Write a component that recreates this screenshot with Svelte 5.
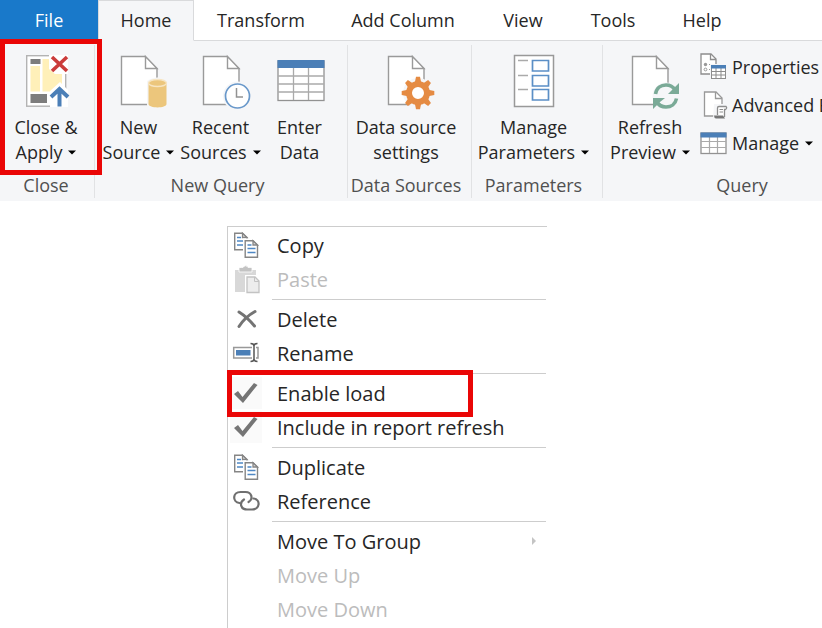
<script>
  const tabs = [
    { name: 'File', width: 98 },
    { name: 'Home', width: 96 },
    { name: 'Transform', width: 134 },
    { name: 'Add Column', width: 150 },
    { name: 'View', width: 90 },
    { name: 'Tools', width: 90 },
    { name: 'Help', width: 88 }
  ];

  const groups = [
    { name: 'Close', width: 95, commands: [{ icon: 'apply', lines: ['Close &', 'Apply'], caret: true, width: 92 }] },
    {
      name: 'New Query',
      width: 253,
      commands: [
        { icon: 'source', lines: ['New', 'Source'], caret: true, width: 82 },
        { icon: 'recent', lines: ['Recent', 'Sources'], caret: true, width: 82 },
        { icon: 'enter', lines: ['Enter', 'Data'], width: 76 }
      ]
    },
    { name: 'Data Sources', width: 124, commands: [{ icon: 'settings', lines: ['Data source', 'settings'], width: 116 }] },
    { name: 'Parameters', width: 131, commands: [{ icon: 'params', lines: ['Manage', 'Parameters'], caret: true, width: 120 }] },
    {
      name: 'Query',
      width: 286,
      commands: [{ icon: 'refresh', lines: ['Refresh', 'Preview'], caret: true, width: 94 }],
      small: [
        { icon: 'properties', label: 'Properties' },
        { icon: 'editor', label: 'Advanced Editor' },
        { icon: 'table', label: 'Manage', caret: true }
      ]
    }
  ];

  const menu = [
    [
      { label: 'Copy', icon: 'copy' },
      { label: 'Paste', icon: 'paste', disabled: true }
    ],
    [
      { label: 'Delete', icon: 'delete' },
      { label: 'Rename', icon: 'rename' }
    ],
    [
      { label: 'Enable load', check: true, marked: true },
      { label: 'Include in report refresh', check: true }
    ],
    [
      { label: 'Duplicate', icon: 'copy' },
      { label: 'Reference', icon: 'link' }
    ],
    [
      { label: 'Move To Group', submenu: true },
      { label: 'Move Up', disabled: true },
      { label: 'Move Down', disabled: true }
    ]
  ];

  const teeth = [0, 45, 90, 135, 180, 225, 270, 315];
</script>

{#snippet page()}
  <path d="M12.5 4.5H36L48 16.5V52.5H12.5Z" fill="#fff" stroke="#9a9a9a" stroke-width="1.4" />
  <path d="M36.5 4.5V16.5H48Z" fill="#fff" stroke="#9a9a9a" stroke-width="1.4" />
{/snippet}

{#snippet bigIcon(name)}
  <svg class="big-icon" viewBox="0 0 60 60" aria-hidden="true">
    {#if name === 'apply'}
      <rect x="10.7" y="3.7" width="39" height="50.5" fill="#fff" stroke="#b3b3b3" stroke-width="1.4" />
      <rect x="14.5" y="7" width="10" height="5" fill="#7d7d7d" />
      <path d="M14.5 14H24V39.5H14.5ZM26.5 7H46V39.5H26.5Z" fill="#fff0b9" />
      <rect x="14.5" y="42" width="16.5" height="9" fill="#7d7d7d" />
      <path d="M33 3H52V22H39L33 17ZM44 30L52 38V55H34V39Z" fill="#fff" />
      <path d="M36 5L51 19M51 5L36 19" stroke="#cb3c3b" stroke-width="3.6" />
      <path d="M35 45L43.5 37L52 45M43.5 37V54.5" fill="none" stroke="#4b7fb7" stroke-width="4" />
    {:else if name === 'source'}
      {@render page()}
      <path d="M38 56V29Q48 22 60 29V56Z" fill="#f5f6f8" />
      <path d="M39.5 31V52C39.5 56.500 57.5 56.500 57.5 52V31" fill="#ecc67c" />
      <ellipse cx="48.5" cy="31" rx="9" ry="3.5" fill="#ecc67c" stroke="#f7e5c2" stroke-width="1.4" />
    {:else if name === 'recent'}
      {@render page()}
      <circle cx="46.5" cy="44" r="14.5" fill="#f5f6f8" />
      <circle cx="46.5" cy="44" r="12" fill="#fff" stroke="#6998ca" stroke-width="1.7" />
      <path d="M45.5 36V45H52" fill="none" stroke="#929292" stroke-width="1.5" />
    {:else if name === 'enter'}
      <rect x="8" y="9" width="46" height="39.5" fill="#fff" stroke="#929292" stroke-width="1.3" />
      <path d="M8 24H54M8 32H54M8 40H54M23.5 16V48M38.5 16V48" stroke="#aaa" stroke-width="1.3" />
      <rect x="7.5" y="8" width="47" height="8" fill="#4b7fb7" />
    {:else if name === 'settings'}
      {@render page()}
      <g transform="translate(42 41)">
        <circle r="15" fill="#f5f6f8" />
        {#each teeth as angle}
          <path d="M-3.5 -9L-2 -16.3H2L3.5 -9Z" fill="#e58b43" transform="rotate({angle})" />
        {/each}
        <circle r="9" fill="#fff" stroke="#e58b43" stroke-width="6" />
      </g>
    {:else if name === 'params'}
      <rect x="10.5" y="3.5" width="39" height="51" fill="#fff" stroke="#999" stroke-width="1.5" />
      <path d="M14 8.5H24M14 23.5H24M14 37.5H24" stroke="#aaa" stroke-width="1.5" />
      <path d="M28.5 8.5H44.5V19H28.5ZM28.5 23.5H44.5V34H28.5ZM28.5 37.5H44.5V48H28.5Z" fill="#fff" stroke="#5b8fc6" stroke-width="1.7" />
    {:else if name === 'refresh'}
      {@render page()}
      <circle cx="46" cy="44" r="13.5" fill="#f5f6f8" />
      <path d="M35.5 42C36.5 36 41 33 46 33C50 33 53 34.5 55 38M56.5 46.5C55.5 52 51 55 46 55C42 55 39 53.5 37 50" fill="none" stroke="#7aaa97" stroke-width="3.6" />
      <path d="M59 31V42H48L52 38ZM33 57V46H45L40 50Z" fill="#7aaa97" />
    {/if}
  </svg>
{/snippet}

{#snippet smallIcon(name)}
  <svg class="small-icon" viewBox="0 0 28 28" aria-hidden="true">
    {#if name === 'properties'}
      <path d="M1 1H11L16 6V21H1Z" fill="#fff" stroke="#8d8d8d" stroke-width="1.3" />
      <path d="M10.5 1V6.5H16" fill="none" stroke="#8d8d8d" stroke-width="1.3" />
      <circle cx="5.5" cy="11.5" r="1.7" fill="#999" />
      <circle cx="5.5" cy="16.5" r="1.4" fill="#fff" stroke="#999" />
      <path d="M9 11.5H12M9 16.5H12" stroke="#999" />
      <rect x="10" y="11" width="18" height="16" fill="#f5f6f8" />
      <rect x="11.5" y="13" width="14" height="12.5" fill="#fff" stroke="#8d8d8d" />
      <path d="M11 18.5H26M11 22H26M16 15V26M21 15V26" stroke="#8d8d8d" />
      <rect x="11" y="12" width="15" height="3.5" fill="#4b7fb7" />
    {:else if name === 'editor'}
      <path d="M4.5 1H16L22 7V25H4.5Z" fill="#fff" stroke="#999" stroke-width="1.3" />
      <path d="M15.5 1V7.5H22" fill="none" stroke="#999" stroke-width="1.3" />
      <path d="M14 13H28V28H13Z" fill="#f5f6f8" />
      <path d="M17.5 24V17Q17.5 15.5 19 15.5H26Q27.5 17 25.5 18.5H24.5V26" fill="#fff" stroke="#8d8d8d" stroke-width="1.3" />
      <path d="M19.5 18.5H23M19.5 21H23" stroke="#8d8d8d" />
      <path d="M14 24.5H23L25 27.5H16Q14 27 14 24.5Z" fill="#777" />
    {:else}
      <rect x="1" y="4" width="25" height="20.5" fill="#fff" stroke="#929292" stroke-width="1.3" />
      <path d="M1 12.5H26M1 18.5H26M9.5 8V24M17.5 8V24" stroke="#aaa" stroke-width="1.2" />
      <rect x=".5" y="3.5" width="26" height="5" fill="#4b7fb7" />
    {/if}
  </svg>
{/snippet}

{#snippet caret()}
  <svg class="caret" viewBox="0 0 8 5" aria-hidden="true"><path d="M0 .5H8L4 4.5Z" fill="#000" /></svg>
{/snippet}

{#snippet sheet()}
  <path d="M.7 .7H8.5L13 5V17.3H.7Z" fill="#fff" stroke="#858585" stroke-width="1.4" />
  <path d="M8.5 .7V5H13Z" fill="#ddd" stroke="#858585" stroke-width="1.3" />
  <path d="M3 5H7M3 8.5H11M3 12.5H11" stroke="#4f88c4" stroke-width="1.5" />
{/snippet}

{#snippet menuIcon(name)}
  <svg class="menu-icon" viewBox="0 0 32 32" aria-hidden="true">
    {#if name === 'copy'}
      <g transform="translate(4 3.5)">{@render sheet()}</g>
      <path d="M13 9.5H25L30 14.5V30H13Z" fill="#fff" />
      <g transform="translate(14.500 11)">{@render sheet()}</g>
    {:else if name === 'paste'}
      <path d="M5 7H11V4H14Q16 1 18 4H21V7H26V29H5Z" fill="#d8d8d8" />
      <path d="M9 4.5H13Q15.5 1 18 4.5H22V9H9Z" fill="#c3c3c3" stroke="#fff" stroke-width=".8" />
      <path d="M15 12H26L31 17V31H15Z" fill="#fff" />
      <path d="M17 14H25L29 18V29.5H17Z" fill="#ededed" stroke="#c3c3c3" stroke-width="1.3" />
      <path d="M24.5 14V18.5H29" fill="none" stroke="#c3c3c3" />
    {:else if name === 'delete'}
      <path d="M9 9Q17 14 24.5 23M25 8.5Q15 14 9 23.5" fill="none" stroke="#747474" stroke-width="3" stroke-linecap="round" />
    {:else if name === 'rename'}
      <path d="M22 10.5H3.7V21H22M26 10.5H28V21H26" fill="#fff" stroke="#999" stroke-width="1.5" />
      <rect x="6" y="13" width="14.5" height="5.500" fill="#4b7fb7" />
      <path d="M20.5 6.5Q24 6.5 24 9V22Q24 24.5 20.5 24.5M27.5 6.5Q24 6.5 24 9M24 22Q24 24.5 27.5 24.5" fill="none" stroke="#555" stroke-width="1.5" />
    {:else if name === 'check'}
      <path d="M4 17L8 14L12.5 20L24 6L27.5 8L13 26Z" fill="#757575" />
    {:else if name === 'link'}
      <g fill="none" stroke="#6f6f6f" stroke-width="2.2" stroke-linecap="round">
        <path d="M9.500 18C2 17 2.500 7 10.500 7H15.500C22 7 23.500 14 18.500 17" />
        <path d="M23.500 13.500C31 14.500 30 24.500 22 24.500H17C10.500 24.500 9 17.500 14 14.500" />
      </g>
    {/if}
  </svg>
{/snippet}

<div class="app">
  <header class="ribbon">
    <nav class="tabs" aria-label="Ribbon tabs">
      {#each tabs as tab}
        <button class="tab" class:file={tab.name === 'File'} class:current={tab.name === 'Home'} style:width="{tab.width}px">
          {tab.name}
        </button>
      {/each}
      <span class="tab-rest"></span>
    </nav>
    <div class="groups">
      {#each groups as group}
        <section class="group" class:marked={group.name === 'Close'} style:width="{group.width}px" aria-label={group.name}>
          <div class="commands">
            {#each group.commands as command}
              <button class="command" style:width="{command.width}px">
                {@render bigIcon(command.icon)}
                <span>{command.lines[0]}</span>
                <span>{command.lines[1]}{#if command.caret}{@render caret()}{/if}</span>
              </button>
            {/each}
            {#if group.small}
              <div class="stack">
                {#each group.small as item}
                  <button class="small">
                    {@render smallIcon(item.icon)}
                    <span>{item.label}{#if item.caret}{@render caret()}{/if}</span>
                  </button>
                {/each}
              </div>
            {/if}
          </div>
          <div class="group-name">{group.name}</div>
        </section>
      {/each}
    </div>
  </header>

  <div class="menu">
    {#each menu as section}
      <div class="section">
        {#each section as item}
          {#if item.check}
            <label class="item" class:marked={item.marked}>
              <input type="checkbox" checked />
              <span class="tick">{@render menuIcon('check')}</span>
              <span>{item.label}</span>
            </label>
          {:else}
            <button class="item" disabled={item.disabled}>
              <span class="slot">{@render menuIcon(item.icon)}</span>
              <span>{item.label}</span>
              {#if item.submenu}
                <svg class="arrow" viewBox="0 0 4 8" aria-hidden="true"><path d="M0 0L4 4L0 8Z" fill="#c4c4c4" /></svg>
              {/if}
            </button>
          {/if}
        {/each}
      </div>
    {/each}
  </div>
</div>

<style>
  .app {
    background: #fff;
    color: #262626;
    font-family: 'Open Sans', 'Noto Sans', sans-serif;
    font-size: 18px;
    line-height: 25px;
    overflow: hidden;
  }

  button {
    border: 0;
    padding: 0;
    background: none;
    color: inherit;
    font: inherit;
    white-space: nowrap;
  }

  svg {
    display: block;
    flex: none;
  }

  .ribbon {
    background: #f5f6f8;
  }

  .tabs {
    display: flex;
    height: 41px;
    background: #fff;
  }

  .tab {
    flex: none;
    border-bottom: 1px solid #d9dadc;
  }

  .tab.file {
    background: #1979ca;
    border-bottom-color: #f5f6f8;
    color: #fff;
  }

  .tab.current {
    background: #f5f6f8;
    border: 1px solid #d9dadc;
    border-bottom-color: #f5f6f8;
  }

  .tab-rest {
    flex: 1;
    border-bottom: 1px solid #d9dadc;
  }

  .groups {
    display: flex;
    padding: 4px 0 3px;
  }

  .group {
    position: relative;
    flex: none;
    box-sizing: border-box;
    padding-right: 7px;
    border-right: 1px solid #e1e2e4;
  }

  .group:first-child {
    padding-right: 2px;
  }

  .commands {
    display: flex;
    justify-content: center;
    height: 128px;
  }

  .command {
    display: flex;
    flex: none;
    flex-direction: column;
    align-items: center;
    padding-top: 7px;
  }

  .big-icon {
    width: 60px;
    height: 60px;
    margin-bottom: 3px;
  }

  .caret {
    display: inline-block;
    width: 8px;
    height: 5px;
    margin-left: 6px;
    vertical-align: 4px;
  }

  .stack {
    flex: 1;
    padding: 3px 0 0 3px;
  }

  .small {
    display: flex;
    align-items: center;
    gap: 4px;
    height: 38px;
  }

  .small-icon {
    width: 28px;
    height: 28px;
  }

  .group-name {
    padding-bottom: 1px;
    color: #505050;
    line-height: 24px;
    text-align: center;
    white-space: nowrap;
  }

  .group.marked::after {
    content: '';
    position: absolute;
    inset: -6px -8px 23px 0;
    z-index: 1;
    border: 5px solid #ea0606;
  }

  .menu {
    width: 318px;
    margin: 25px auto 0 227px;
    padding: 1px 1px 2px 0;
    border-top: 1px solid #cdcdcd;
    border-left: 1px solid #cdcdcd;
    font-size: 20px;
  }

  .section + .section::before {
    content: '';
    display: block;
    height: 1px;
    margin: 3px 0 2px 44px;
    background: #cdcdcd;
  }

  .item {
    position: relative;
    display: flex;
    align-items: center;
    gap: 15px;
    width: 100%;
    height: 34px;
    padding-left: 2px;
    box-sizing: border-box;
  }

  .item:disabled {
    color: #bcbcbc;
  }

  .item input {
    position: absolute;
    inset: 1px auto 1px 2px;
    width: 32px;
    margin: 0;
    opacity: 0;
  }

  .tick {
    background: #fafafa;
  }

  .menu-icon {
    width: 32px;
    height: 32px;
  }

  .arrow {
    width: 4px;
    height: 8px;
    margin: 0 10px 0 auto;
  }

  .item.marked::after {
    content: '';
    position: absolute;
    inset: -6px 73px -7px -1px;
    z-index: 1;
    border: 5px solid #ea0606;
  }
</style>
